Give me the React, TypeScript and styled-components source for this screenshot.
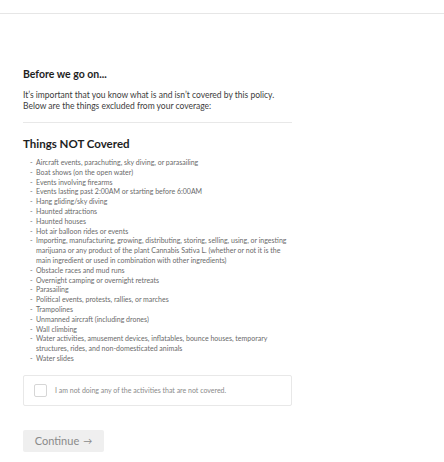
import React, { useState } from 'react';
import styled, { createGlobalStyle } from 'styled-components';

const exclusions: string[] = [
  'Aircraft events, parachuting, sky diving, or parasailing',
  'Boat shows (on the open water)',
  'Events involving firearms',
  'Events lasting past 2:00AM or starting before 6:00AM',
  'Hang gliding/sky diving',
  'Haunted attractions',
  'Haunted houses',
  'Hot air balloon rides or events',
  'Importing, manufacturing, growing, distributing, storing, selling, using, or ingesting marijuana or any product of the plant Cannabis Sativa L. (whether or not it is the main ingredient or used in combination with other ingredients)',
  'Obstacle races and mud runs',
  'Overnight camping or overnight retreats',
  'Parasailing',
  'Political events, protests, rallies, or marches',
  'Trampolines',
  'Unmanned aircraft (including drones)',
  'Wall climbing',
  'Water activities, amusement devices, inflatables, bounce houses, temporary structures, rides, and non-domesticated animals',
  'Water slides',
];

const GlobalStyle = createGlobalStyle`
  body {
    margin: 0;
    background: #ffffff;
    font-family: Lato, "Noto Sans", sans-serif;
  }
`;

export default function App() {
  const [checked, setChecked] = useState(false);

  return (
    <>
      <GlobalStyle />
      <TopBar />
      <Page>
        <Title>Before we go on...</Title>
        <Intro>
          It’s important that you know what is and isn’t covered by this policy.
          Below are the things excluded from your coverage:
        </Intro>
        <Divider />
        <SectionTitle>Things NOT Covered</SectionTitle>
        <List>
          {exclusions.map((item, idx) => (
            <Item key={idx}>{item}</Item>
          ))}
        </List>
        <ConfirmBox onClick={() => setChecked(!checked)}>
          <Check checked={checked} />
          <ConfirmLabel>I am not doing any of the activities that are not covered.</ConfirmLabel>
        </ConfirmBox>
        <ContinueButton disabled={!checked}>
          Continue <Arrow>→</Arrow>
        </ContinueButton>
      </Page>
    </>
  );
}

const TopBar = styled.div`
  height: 13px;
  border-bottom: 1px solid #e6e6e6;
`;

const Page = styled.div`
  width: 269px;
  padding: 53px 0 0 23px;
  display: flex;
  flex-direction: column;
`;

const Title = styled.div`
  font-size: 10.5px;
  font-weight: 700;
  color: #1e1e1e;
  line-height: 14px;
`;

const Intro = styled.div`
  margin-top: 9px;
  font-size: 8.5px;
  line-height: 11px;
  color: #3c3c3c;
`;

const Divider = styled.div`
  margin-top: 10px;
  height: 1px;
  background: #e8e8e8;
`;

const SectionTitle = styled.div`
  margin-top: 13px;
  font-size: 11.5px;
  font-weight: 700;
  color: #1e1e1e;
  line-height: 16px;
`;

const List = styled.ul`
  margin: 6px 0 0;
  padding: 0 0 0 8px;
  list-style: none;
`;

const Item = styled.li`
  position: relative;
  padding-left: 5px;
  font-size: 7px;
  line-height: 9.8px;
  color: #6a6a6a;

  &::before {
    content: '-';
    position: absolute;
    left: -1px;
  }
`;

const ConfirmBox = styled.div`
  margin-top: 11px;
  height: 29px;
  border: 1px solid #e8e8e8;
  border-radius: 2px;
  display: flex;
  align-items: center;
  padding-left: 10px;
  gap: 8px;
  cursor: pointer;
`;

const Check = styled.div<{ checked: boolean }>`
  width: 11px;
  height: 11px;
  border: 1px solid #d6d6d6;
  border-radius: 2px;
  background: ${({ checked }) => (checked ? '#555' : '#fff')};
`;

const ConfirmLabel = styled.div`
  font-size: 7px;
  color: #8a8a8a;
`;

const ContinueButton = styled.button<{ disabled: boolean }>`
  margin-top: 24px;
  align-self: flex-start;
  height: 22px;
  width: 81px;
  border: none;
  border-radius: 2px;
  background: #efefef;
  color: #8a8a8a;
  font-family: Lato, "Noto Sans", sans-serif;
  font-size: 11px;
  display: flex;
  align-items: center;
  justify-content: center;
  gap: 4px;
  cursor: ${({ disabled }) => (disabled ? 'not-allowed' : 'pointer')};
`;

const Arrow = styled.span`
  font-size: 9px;
`;
